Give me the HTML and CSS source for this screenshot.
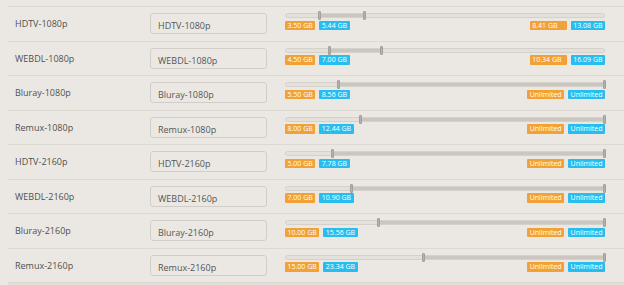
FILE: index.html
```html
<!DOCTYPE html>
<html>
<head>
  <title>Quality Definitions</title>
  <meta name="viewport" content="width=device-width, initial-scale=1" />
  <link rel="stylesheet" href="styles.css">
</head>
<body>
  <div class="definitions">
    <div class="row">
      <div class="title">HDTV-1080p</div>
      <div class="input">HDTV-1080p</div>
      <div class="size">
        <div class="track">
          <div class="range" style="left: 10.5%; right: 75.2%"></div>
          <span class="handle" style="left: 10.5%"></span>
          <span class="handle" style="left: 24.8%"></span>
        </div>
        <div class="labels">
          <span class="badge warn">3.50 GB</span><span class="badge info">5.44 GB</span>
          <span class="spacer"></span>
          <span class="badge warn wide">8.41 GB</span><span class="badge info">13.08 GB</span>
        </div>
      </div>
    </div>
    <div class="row">
      <div class="title">WEBDL-1080p</div>
      <div class="input">WEBDL-1080p</div>
      <div class="size">
        <div class="track">
          <div class="range" style="left: 13.6%; right: 70%"></div>
          <span class="handle" style="left: 13.6%"></span>
          <span class="handle" style="left: 30%"></span>
        </div>
        <div class="labels">
          <span class="badge warn">4.50 GB</span><span class="badge info">7.00 GB</span>
          <span class="spacer"></span>
          <span class="badge warn wide">10.34 GB</span><span class="badge info">16.09 GB</span>
        </div>
      </div>
    </div>
    <div class="row">
      <div class="title">Bluray-1080p</div>
      <div class="input">Bluray-1080p</div>
      <div class="size">
        <div class="track">
          <div class="range" style="left: 16.5%; right: 0"></div>
          <span class="handle" style="left: 16.5%"></span>
          <span class="handle" style="left: 100%"></span>
        </div>
        <div class="labels">
          <span class="badge warn">5.50 GB</span><span class="badge info">8.56 GB</span>
          <span class="spacer"></span>
          <span class="badge warn">Unlimited</span><span class="badge info">Unlimited</span>
        </div>
      </div>
    </div>
    <div class="row">
      <div class="title">Remux-1080p</div>
      <div class="input">Remux-1080p</div>
      <div class="size">
        <div class="track">
          <div class="range" style="left: 23.4%; right: 0"></div>
          <span class="handle" style="left: 23.4%"></span>
          <span class="handle" style="left: 100%"></span>
        </div>
        <div class="labels">
          <span class="badge warn">8.00 GB</span><span class="badge info">12.44 GB</span>
          <span class="spacer"></span>
          <span class="badge warn">Unlimited</span><span class="badge info">Unlimited</span>
        </div>
      </div>
    </div>
    <div class="row">
      <div class="title">HDTV-2160p</div>
      <div class="input">HDTV-2160p</div>
      <div class="size">
        <div class="track">
          <div class="range" style="left: 14.7%; right: 0"></div>
          <span class="handle" style="left: 14.7%"></span>
          <span class="handle" style="left: 100%"></span>
        </div>
        <div class="labels">
          <span class="badge warn">5.00 GB</span><span class="badge info">7.78 GB</span>
          <span class="spacer"></span>
          <span class="badge warn">Unlimited</span><span class="badge info">Unlimited</span>
        </div>
      </div>
    </div>
    <div class="row">
      <div class="title">WEBDL-2160p</div>
      <div class="input">WEBDL-2160p</div>
      <div class="size">
        <div class="track">
          <div class="range" style="left: 20.6%; right: 0"></div>
          <span class="handle" style="left: 20.6%"></span>
          <span class="handle" style="left: 100%"></span>
        </div>
        <div class="labels">
          <span class="badge warn">7.00 GB</span><span class="badge info">10.90 GB</span>
          <span class="spacer"></span>
          <span class="badge warn">Unlimited</span><span class="badge info">Unlimited</span>
        </div>
      </div>
    </div>
    <div class="row">
      <div class="title">Bluray-2160p</div>
      <div class="input">Bluray-2160p</div>
      <div class="size">
        <div class="track">
          <div class="range" style="left: 29.2%; right: 0"></div>
          <span class="handle" style="left: 29.2%"></span>
          <span class="handle" style="left: 100%"></span>
        </div>
        <div class="labels">
          <span class="badge warn">10.00 GB</span><span class="badge info">15.56 GB</span>
          <span class="spacer"></span>
          <span class="badge warn">Unlimited</span><span class="badge info">Unlimited</span>
        </div>
      </div>
    </div>
    <div class="row">
      <div class="title">Remux-2160p</div>
      <div class="input">Remux-2160p</div>
      <div class="size">
        <div class="track">
          <div class="range" style="left: 43.3%; right: 0"></div>
          <span class="handle" style="left: 43.3%"></span>
          <span class="handle" style="left: 100%"></span>
        </div>
        <div class="labels">
          <span class="badge warn">15.00 GB</span><span class="badge info">23.34 GB</span>
          <span class="spacer"></span>
          <span class="badge warn">Unlimited</span><span class="badge info">Unlimited</span>
        </div>
      </div>
    </div>
    <div class="footer"></div>
  </div>
</body>
</html>
```

FILE: styles.css
```css
body { margin: 0; background: #ebe8e3; font-family: "Open Sans", sans-serif; color: #505050; overflow: hidden; }
.definitions { margin: 6px 0 0 8px; border-top: 1px solid #dcd8d2; }
.row { display: flex; align-items: flex-start; height: 33.5px; padding-top: 6px; box-sizing: border-box; border-bottom: 1px solid #dcd8d2; height: 34.5px; }
.title { width: 142px; padding-left: 7px; box-sizing: border-box; font-size: 9px; line-height: 21px; }
.input { width: 117px; height: 21px; box-sizing: border-box; border: 1px solid #d2cec7; border-radius: 3px; padding: 0 7px; font-size: 9px; line-height: 21px; padding-top: 1px; color: #555; }
.size { width: 320px; margin-left: 18px; }
.track { position: relative; height: 5px; border: 1px solid #d4d0ca; border-radius: 3px; background: #e4e1dc; box-sizing: border-box; }
.range { position: absolute; top: 0; bottom: 0; background: #cbc7c0; }
.handle { position: absolute; top: -3px; width: 3px; height: 9px; margin-left: -1.5px; box-sizing: border-box; background: #b5b1ab; border: 1px solid #a39f99; border-radius: 1px; }
.labels { display: flex; margin-top: 2.7px; }
.spacer { flex: 1; }
.badge { height: 9.5px; line-height: 9.5px; padding: 0 2.5px; margin-right: 4px; font-size: 7px; color: #fff; border-radius: 1px; white-space: nowrap; }
.badge:last-child { margin-right: 0; }
.labels .warn + .info { margin-left: 0; }
.warn { background: #f1a135; }
.info { background: #27bdef; }
.wide { min-width: 37px; box-sizing: border-box; }
.footer { height: 3px; background: #e2dfd9; }
```
